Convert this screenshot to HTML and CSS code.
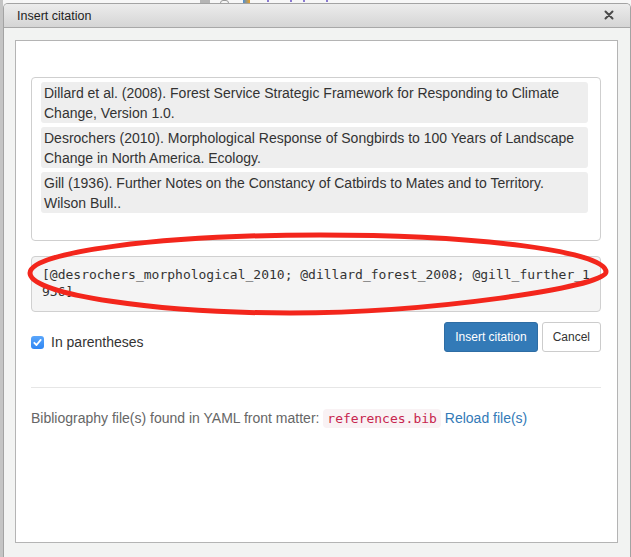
FILE: index.html
```html
<!DOCTYPE html>
<html>
<head>
<meta charset="utf-8">
<title>Insert citation</title>
<link rel="stylesheet" href="styles.css">
</head>
<body>
<div class="screen">
  <div class="left-edge"></div>
  <div class="main">
    <div class="topbar">
      <span class="tb-block"></span>
      <span class="tb-ring"></span>
      <span class="tb-color"></span>
      <span class="tb-dot d1"></span>
      <span class="tb-dot d2"></span>
      <span class="tb-dot d3"></span>
      <span class="tb-dot d4"></span>
    </div>
    <div class="dialog">
      <div class="titlebar">
        <span class="title">Insert citation</span>
        <svg class="close" width="10" height="10" viewBox="0 0 10 10"><path d="M1.5 1.5 L8.5 8.5 M8.5 1.5 L1.5 8.5" stroke="#4a4a4a" stroke-width="2" stroke-linecap="round"/></svg>
      </div>
      <div class="dialog-body">
        <div class="panel">
          <div class="cite-list">
            <div class="cite-item">Dillard et al. (2008). Forest Service Strategic Framework for Responding to Climate Change, Version 1.0.</div>
            <div class="cite-item">Desrochers (2010). Morphological Response of Songbirds to 100 Years of Landscape Change in North America. Ecology.</div>
            <div class="cite-item">Gill (1936). Further Notes on the Constancy of Catbirds to Mates and to Territory. Wilson Bull..</div>
          </div>
          <div class="cite-text">[@desrochers_morphological_2010; @dillard_forest_2008; @gill_further_1936]</div>
          <div class="action-row">
            <label class="check-label">
              <span class="checkbox"><svg width="13" height="13" viewBox="0 0 13 13"><path d="M3.3 6.8 L5.5 9 L9.7 3.9" fill="none" stroke="#fff" stroke-width="1.8" stroke-linecap="round" stroke-linejoin="round"/></svg></span>
              <span>In parentheses</span>
            </label>
            <div class="buttons">
              <button class="btn btn-primary">Insert citation</button>
              <button class="btn btn-default">Cancel</button>
            </div>
          </div>
          <hr class="sep">
          <p class="bib">Bibliography file(s) found in YAML front matter: <code class="bib-file">references.bib</code> <a class="reload" href="#">Reload file(s)</a></p>
        </div>
      </div>
    </div>
  </div>
  <svg class="annotation" width="631" height="557" viewBox="0 0 631 557">
    <path d="M30 273 C30 252 160 235 320 235 C477 235 606 251 606 272 C606 287 430 313 290 313 C160 313 30 295 30 273 Z" fill="none" stroke="#f3261c" stroke-width="5"/>
  </svg>
</div>
</body>
</html>
```
FILE: styles.css
```css
* { box-sizing: border-box; }
html, body { margin: 0; padding: 0; }
body {
  width: 631px;
  height: 557px;
  overflow: hidden;
  background: #f4f4f4;
  font-family: "Liberation Sans", Arial, sans-serif;
  color: #333;
}
.screen {
  position: relative;
  display: flex;
  width: 631px;
  height: 557px;
  overflow: hidden;
}
.left-edge {
  flex: none;
  width: 3px;
  background: #c4c4c4;
}
.main {
  flex: 1;
  display: flex;
  flex-direction: column;
  min-width: 0;
}
.topbar {
  flex: none;
  height: 3px;
  overflow: hidden;
  display: flex;
  align-items: flex-start;
  background: #f7f7f7;
}
.tb-block { width: 10px; height: 3px; background: #b5b5b5; margin-left: 197px; }
.tb-ring { width: 9px; height: 6px; border: 1px solid #9a9a9a; border-radius: 4px; margin-left: 10px; }
.tb-color { width: 7px; height: 3px; background: linear-gradient(90deg, #4a8fd8, #f0a020); margin-left: 14px; }
.tb-dot { width: 2px; height: 2px; background: #8a7ad0; }
.d1 { margin-left: 17px; }
.d2 { margin-left: 21px; }
.d3 { margin-left: 11px; }
.d4 { margin-left: 21px; }

.dialog {
  flex: 1;
  display: flex;
  flex-direction: column;
  border: 1px solid #a3a3a3;
  border-bottom: none;
  border-radius: 5px 5px 0 0;
  background: #f2f3f2;
  overflow: hidden;
}
.titlebar {
  flex: none;
  height: 24px;
  display: flex;
  align-items: center;
  justify-content: space-between;
  padding: 0 16px 0 13px;
  background: linear-gradient(#ececec, #d5d5d5);
  border-bottom: 1px solid #a8a8a8;
}
.title {
  font-size: 12.5px;
  color: #1e1e1e;
}
.close { display: block; margin-top: -1px; }
.dialog-body {
  flex: 1;
  padding: 12px 12px 0 11px;
}
.panel {
  height: 503px;
  background: #fff;
  border: 1px solid #b4b4b4;
  padding: 36px 16px 0 15px;
}
.cite-list {
  height: 164px;
  border: 1px solid #cfcfcf;
  border-radius: 4px;
  padding: 4px 12px 0 9px;
}
.cite-item {
  background: #eee;
  border-radius: 3px;
  padding: 1px 3px 0;
  font-size: 14px;
  line-height: 20px;
  margin-bottom: 4px;
  color: #333;
}
.cite-text {
  margin-top: 15px;
  height: 56px;
  border: 1px solid #d0d0d0;
  border-radius: 4px;
  background: #f4f4f4;
  padding: 9px 4px 0 10px;
  font-family: "DejaVu Sans Mono", monospace;
  font-size: 13px;
  line-height: 17.4px;
  color: #333;
  word-break: break-all;
}
.action-row {
  margin-top: 10px;
  display: flex;
  justify-content: space-between;
  align-items: flex-start;
}
.check-label {
  margin-top: 10px;
  display: flex;
  align-items: center;
  gap: 7px;
  font-size: 14px;
  line-height: 20px;
  color: #333;
}
.checkbox {
  display: block;
  width: 13px;
  height: 13px;
  border-radius: 3px;
  background: linear-gradient(#5aa6fb, #2f86f3);
}
.checkbox svg { display: block; }
.buttons {
  display: flex;
  gap: 4px;
}
.btn {
  height: 30px;
  padding: 0 10px;
  border-radius: 3px;
  font-family: "Liberation Sans", Arial, sans-serif;
  font-size: 12px;
  border: 1px solid;
}
.btn-primary {
  background: #337ab7;
  border-color: #2e6da4;
  color: #fff;
}
.btn-default {
  background: #fff;
  border-color: #ccc;
  color: #333;
}
.sep {
  margin: 35px 0 0;
  border: none;
  border-top: 1px solid #e6e6e6;
}
.bib {
  margin: 20px 0 0;
  font-size: 14px;
  line-height: 20px;
  color: #666;
}
.bib-file {
  font-family: "DejaVu Sans Mono", monospace;
  font-size: 13px;
  line-height: 15px;
  padding: 2px 4px;
  border-radius: 4px;
  background: #f9f2f4;
  color: #c7254e;
}
.reload {
  color: #337ab7;
  text-decoration: none;
}
.annotation {
  position: absolute;
  left: 0;
  top: 0;
  pointer-events: none;
}
```
